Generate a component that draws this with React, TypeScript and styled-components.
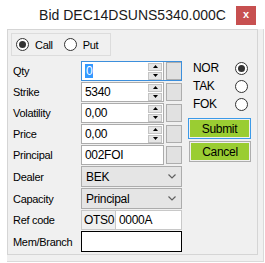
import React from "react";
import styled, { createGlobalStyle } from "styled-components";

const GlobalStyle = createGlobalStyle`
  html, body {
    margin: 0;
    padding: 0;
    background: #fff;
  }
  body {
    font-family: "Liberation Sans", Arial, sans-serif;
    font-size: 11px;
    color: #000;
  }
`;

const FIELD_ROWS = [20, 20, 20, 20, 20, 21, 21, 20, 21];

const App: React.FC = () => {
  return (
    <>
      <GlobalStyle />
      <Window>
        <TitleBar>
          <span />
          <Title>Bid DEC14DSUNS5340.000C</Title>
          <CloseButton>x</CloseButton>
        </TitleBar>
        <Client>
          <Panel>
            <GroupBox>
              <OptionBox>
                <RadioItem>
                  <Radio $checked />
                  <span>Call</span>
                </RadioItem>
                <RadioItem $gap>
                  <Radio />
                  <span>Put</span>
                </RadioItem>
              </OptionBox>

              <Body>
                <Fields>
                  <Label>Qty</Label>
                  <SpinField value="0" focused selected />

                  <Label>Strike</Label>
                  <SpinField value="5340" />

                  <Label>Volatility</Label>
                  <SpinField value="0,00" />

                  <Label>Price</Label>
                  <SpinField value="0,00" />

                  <Label>Principal</Label>
                  <FieldRow>
                    <TextBox>002FOI</TextBox>
                    <SideSquare />
                  </FieldRow>

                  <Label>Dealer</Label>
                  <Combo value="BEK" />

                  <Label>Capacity</Label>
                  <Combo value="Principal" />

                  <Label>Ref code</Label>
                  <RefField>
                    <RefPrefix>OTS0</RefPrefix>
                    <RefValue>0000A</RefValue>
                  </RefField>

                  <Label>Mem/Branch</Label>
                  <MemBox />
                </Fields>

                <SideColumn>
                  <SideOption>
                    <span>NOR</span>
                    <Radio $checked />
                  </SideOption>
                  <SideOption>
                    <span>TAK</span>
                    <Radio />
                  </SideOption>
                  <SideOption>
                    <span>FOK</span>
                    <Radio />
                  </SideOption>
                  <ActionButton $focused>Submit</ActionButton>
                  <ActionButton $shift>Cancel</ActionButton>
                </SideColumn>
              </Body>
            </GroupBox>
          </Panel>
        </Client>
      </Window>
    </>
  );
};

export default App;

type SpinProps = { value: string; focused?: boolean; selected?: boolean };

const SpinField: React.FC<SpinProps> = ({ value, focused, selected }) => (
  <FieldRow $focused={focused}>
    <TextBox>
      {selected ? <Selection>{value}</Selection> : value}
      <Spinner>
        <SpinButton>
          <svg width="5" height="3" viewBox="0 0 5 3">
            <path d="M0 3 L2.5 0 L5 3 Z" fill="#000" />
          </svg>
        </SpinButton>
        <SpinButton>
          <svg width="5" height="3" viewBox="0 0 5 3">
            <path d="M0 0 L2.5 3 L5 0 Z" fill="#000" />
          </svg>
        </SpinButton>
      </Spinner>
    </TextBox>
    <SideSquare />
  </FieldRow>
);

const Combo: React.FC<{ value: string }> = ({ value }) => (
  <ComboBox>
    <span>{value}</span>
    <svg width="8" height="5" viewBox="0 0 8 5">
      <path d="M0.5 0.5 L4 4 L7.5 0.5" fill="none" stroke="#606060" strokeWidth="1.2" />
    </svg>
  </ComboBox>
);

const Window = styled.div`
  width: 265px;
  height: 263px;
  background: #fff;
  display: flex;
  flex-direction: column;
  letter-spacing: -0.3px;
`;

const TitleBar = styled.div`
  height: 29px;
  display: grid;
  grid-template-columns: 1fr auto 1fr;
  align-items: center;
`;

const Title = styled.div`
  font-size: 14px;
  color: #1a1a1a;
  letter-spacing: 0;
  padding-top: 1px;
`;

const CloseButton = styled.div`
  justify-self: end;
  align-self: start;
  margin: 6px 9px 0 0;
  width: 20px;
  height: 19px;
  background: #c75050;
  color: #fff;
  font-weight: bold;
  font-size: 11px;
  display: flex;
  align-items: center;
  justify-content: center;
  line-height: 1;
  padding-bottom: 2px;
  box-sizing: border-box;
`;

const Client = styled.div`
  flex: 1;
  display: flex;
  padding: 0 1px 1px 7px;
`;

const Panel = styled.div`
  flex: 1;
  display: flex;
  background: #f0f0f0;
  border-right: 1px solid #dadada;
  border-bottom: 1px solid #dadada;
  padding: 0 5px 6px 0;
`;

const GroupBox = styled.div`
  flex: 1;
  border: 1px solid #d5d5d5;
  padding: 3px 0 0 3px;
`;

const OptionBox = styled.div`
  width: 100px;
  height: 23px;
  box-sizing: border-box;
  border: 1px solid #dcdcdc;
  display: flex;
  align-items: center;
  padding-left: 4px;
`;

const RadioItem = styled.label<{ $gap?: boolean }>`
  display: flex;
  align-items: center;
  gap: 6px;
  margin-left: ${(p) => (p.$gap ? "11px" : "0")};
`;

const Radio = styled.span<{ $checked?: boolean }>`
  width: 13px;
  height: 13px;
  box-sizing: border-box;
  border: 1px solid #333;
  border-radius: 50%;
  background: #fff;
  display: inline-flex;
  align-items: center;
  justify-content: center;
  &::after {
    content: "";
    width: 7px;
    height: 7px;
    border-radius: 50%;
    background: ${(p) => (p.$checked ? "#333" : "transparent")};
  }
`;

const Body = styled.div`
  display: flex;
  margin-top: 5px;
`;

const Fields = styled.div`
  margin-left: 2px;
  display: grid;
  grid-template-columns: 68px 101px;
  grid-template-rows: ${FIELD_ROWS.map((h) => `${h}px`).join(" ")};
  row-gap: 1px;
`;

const Label = styled.div`
  display: flex;
  align-items: center;
`;

const FieldRow = styled.div<{ $focused?: boolean }>`
  display: flex;
  align-items: center;
  gap: 1px;
  outline: ${(p) => (p.$focused ? "1px solid #3c8fdc" : "none")};
  outline-offset: -1px;
`;

const TextBox = styled.div`
  width: 84px;
  height: 100%;
  box-sizing: border-box;
  border: 1px solid #acacac;
  background: #fff;
  display: flex;
  align-items: center;
  padding: 0 1px 0 3px;
  font-size: 12px;
`;

const Selection = styled.span`
  background: #3399ff;
  color: #fff;
  padding: 0 1px;
`;

const Spinner = styled.div`
  margin-left: auto;
  display: flex;
  flex-direction: column;
  gap: 1px;
`;

const SpinButton = styled.div`
  width: 14px;
  height: 8px;
  box-sizing: border-box;
  background: #e6e6e6;
  border: 1px solid #c4c4c4;
  display: flex;
  align-items: center;
  justify-content: center;
`;

const SideSquare = styled.div`
  margin-left: 1px;
  width: 16px;
  height: 18px;
  box-sizing: border-box;
  background: #e1e1e1;
  border: 1px solid #adadad;
`;

const ComboBox = styled.div`
  box-sizing: border-box;
  border: 1px solid #acacac;
  background: #e5e5e5;
  display: flex;
  align-items: center;
  justify-content: space-between;
  padding: 0 5px 0 4px;
  font-size: 12px;
`;

const RefField = styled.div`
  display: flex;
  font-size: 12px;
`;

const RefPrefix = styled.div`
  width: 35px;
  box-sizing: border-box;
  border: 1px solid #c8c8c8;
  background: #f0f0f0;
  display: flex;
  align-items: center;
  padding-left: 2px;
`;

const RefValue = styled.div`
  flex: 1;
  margin-left: -1px;
  box-sizing: border-box;
  border: 1px solid #c8c8c8;
  background: #fff;
  display: flex;
  align-items: center;
  padding-left: 3px;
`;

const MemBox = styled.div`
  box-sizing: border-box;
  border: 1px solid #000;
  background: #fff;
`;

const SideColumn = styled.div`
  margin: -2px 0 0 6px;
  width: 63px;
  display: flex;
  flex-direction: column;
`;

const SideOption = styled.div`
  height: 18px;
  display: flex;
  align-items: center;
  justify-content: space-between;
  padding: 0 3px 0 5px;
  font-size: 12px;
`;

const ActionButton = styled.div<{ $focused?: boolean; $shift?: boolean }>`
  height: 21px;
  box-sizing: border-box;
  margin-top: ${(p) => (p.$focused ? "5px" : "2px")};
  margin-left: ${(p) => (p.$shift ? "1px" : "0")};
  border: 1px solid ${(p) => (p.$focused ? "#3c9ae8" : "#adadad")};
  padding: 1px;
  background: #9acd32;
  background-clip: content-box;
  display: flex;
  align-items: center;
  justify-content: center;
  font-size: 12px;
`;
